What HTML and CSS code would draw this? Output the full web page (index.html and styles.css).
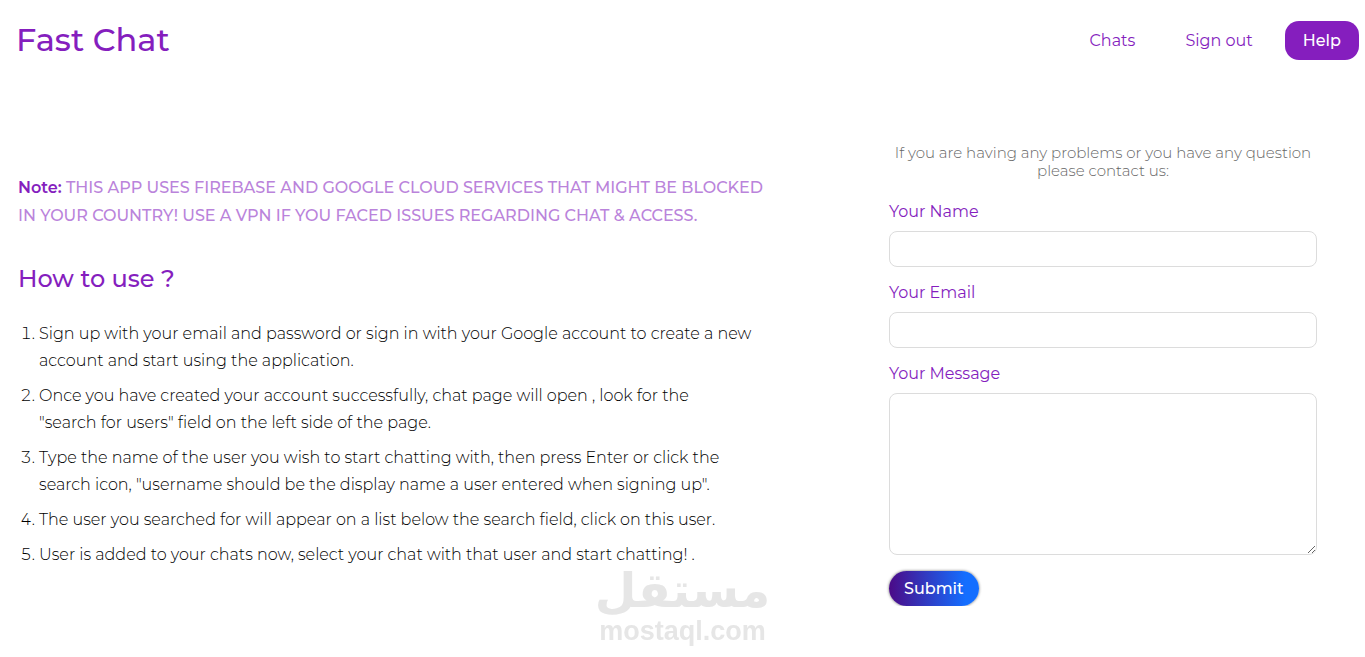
FILE: index.html
```html
<!DOCTYPE html>
<html lang="en">
<head>
    <meta charset="UTF-8">
    <meta name="viewport" content="width=device-width, initial-scale=1.0">
    <title>Fast Chat</title>
    <link rel="stylesheet" href="styles.css">
</head>
<body>
    <header class="header">
        <h1 class="logo">Fast Chat</h1>
        <nav class="nav">
            <a href="#chats" class="nav-link">Chats</a>
            <a href="#signout" class="nav-link">Sign out</a>
            <a href="#help" class="nav-link active">Help</a>
        </nav>
    </header>

    <main class="main">
        <section class="guide">
            <p class="note"><strong>Note:</strong> THIS APP USES FIREBASE AND GOOGLE CLOUD SERVICES THAT MIGHT BE BLOCKED IN YOUR COUNTRY! USE A VPN IF YOU FACED ISSUES REGARDING CHAT &amp; ACCESS.</p>
            <h2 class="guide-title">How to use ?</h2>
            <ol class="steps">
                <li>Sign up with your email and password or sign in with your Google account to create a new account and start using the application.</li>
                <li>Once you have created your account successfully, chat page will open , look for the <br>"search for users" field on the left side of the page.</li>
                <li>Type the name of the user you wish to start chatting with, then press Enter or click the search icon, "username should be the display name a user entered when signing up".</li>
                <li>The user you searched for will appear on a list below the search field, click on this user.</li>
                <li>User is added to your chats now, select your chat with that user and start chatting! .</li>
            </ol>
        </section>

        <!-- contact form -->
        <form class="contact">
            <p class="contact-text">If you are having any problems or you have any question please contact us:</p>
            <label for="name">Your Name</label>
            <input type="text" id="name" name="name">
            <label for="email">Your Email</label>
            <input type="email" id="email" name="email">
            <label for="message">Your Message</label>
            <textarea id="message" name="message"></textarea>
            <button type="submit" class="submit">Submit</button>
        </form>
    </main>

    <div class="watermark">
        <span class="watermark-ar" lang="ar">مستقل</span>
        <span class="watermark-en">mostaql.com</span>
    </div>
</body>
</html>
```

FILE: styles.css
```css
* {
    box-sizing: border-box;
}

body {
    margin: 0;
    font-family: "Montserrat", "Inter", sans-serif;
    font-size: 16px;
    color: #111;
    background-color: #fff;
}

/* header */
.header {
    display: flex;
    justify-content: space-between;
    align-items: center;
    height: 80px;
    padding: 0 6px 0 16px;
}

.logo {
    margin: 0;
    font-size: 32px;
    font-weight: 500;
    line-height: 40px;
    color: #851ebe;
}

.nav {
    display: flex;
    align-items: center;
    gap: 14px;
}

.nav-link {
    padding: 10px 18px;
    border-radius: 14px;
    line-height: 19px;
    color: #851ebe;
    text-decoration: none;
}

.nav-link.active {
    font-weight: 500;
    color: #fff;
    background-color: #851ebe;
}

/* two columns */
.main {
    display: grid;
    grid-template-columns: 8fr 5fr;
}

.guide {
    padding: 94px 72px 0 18px;
}

.note {
    margin: 0;
    font-weight: 500;
    line-height: 28px;
    color: #ba83db;
}

.note strong {
    font-weight: 600;
    color: #851ebe;
}

.guide-title {
    margin: 34px 0 26px;
    font-size: 24px;
    font-weight: 500;
    line-height: 30px;
    color: #851ebe;
}

.steps {
    margin: 0;
    padding-left: 21px;
    font-weight: 300;
    line-height: 27px;
    color: #000;
}

.steps li {
    margin-bottom: 8px;
}

/* contact form */
.contact {
    display: flex;
    flex-direction: column;
    padding: 64px 48px 0 49px;
}

.contact-text {
    margin: 0 0 22px;
    font-size: 15px;
    font-weight: 300;
    line-height: 18px;
    text-align: center;
    color: #666;
}

.contact label {
    margin-bottom: 9px;
    line-height: 20px;
    color: #851ebe;
}

.contact input,
.contact textarea {
    width: 100%;
    height: 36px;
    margin-bottom: 16px;
    padding: 6px 10px;
    border: 1px solid #dcdcdc;
    border-radius: 8px;
    font: inherit;
    outline: none;
}

.contact textarea {
    height: 162px;
    resize: vertical;
}

.submit {
    align-self: flex-start;
    height: 35px;
    padding: 0 15px;
    border: none;
    border-radius: 18px;
    font-family: inherit;
    font-size: 16px;
    font-weight: 500;
    color: #fff;
    background: linear-gradient(to right, #4b0a87, #146eff 85%);
    box-shadow: 0 0 3px rgba(0, 0, 0, 0.6);
    cursor: pointer;
}

/* watermark */
.watermark {
    position: fixed;
    left: 50%;
    bottom: 12px;
    display: flex;
    flex-direction: column;
    align-items: center;
    transform: translateX(-50%);
    font-weight: bold;
    color: #e6e6e6;
    pointer-events: none;
}

.watermark-ar {
    font-family: "DejaVu Sans", sans-serif;
    font-size: 48px;
    line-height: 54px;
}

.watermark-en {
    font-family: "Liberation Sans", sans-serif;
    font-size: 27px;
    line-height: 28px;
}
```
